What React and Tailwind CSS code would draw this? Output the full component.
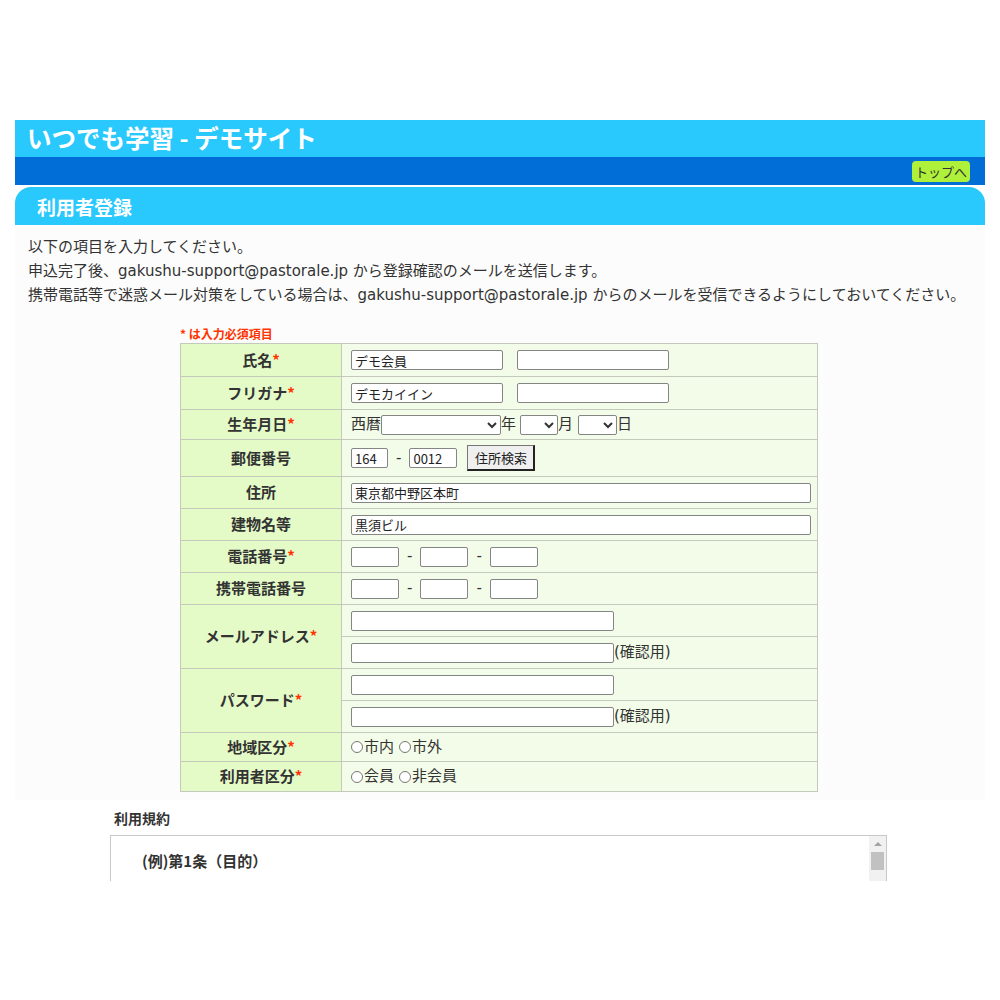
import React from "react";

const font = { fontFamily: '"Noto Sans CJK JP", "Noto Sans", sans-serif' };
const wide = { fontFamily: '"DejaVu Sans", "Noto Sans CJK JP", sans-serif' };

const Req = () => <span className="text-[#ff3300]">*</span>;

const Input = ({ w, value = "" }) => (
    <input
        type="text"
        defaultValue={value}
        style={font}
        className={`${w} h-[20px] bg-white border border-[#858585] rounded-[2px] px-[3px] text-[13px] text-[#222] leading-none outline-none`}
    />
);

const Radio = ({ label }) => (
    <span className="inline-flex items-center mr-[5px]">
        <span className="inline-block w-[12px] h-[12px] rounded-full border border-[#777] bg-white mr-[1px]"></span>
        {label}
    </span>
);

const Label = ({ children, rowSpan }) => (
    <td rowSpan={rowSpan} className="bg-[#e4fbc8] border border-[#c3c9bb] text-center font-bold text-[15px] text-[#333]">
        {children}
    </td>
);

const Cell = ({ children }) => (
    <td className="bg-[#f3fce9] border border-[#c3c9bb] pl-[9px] text-[15px] text-[#333]" style={wide}>
        <div className="flex items-center">{children}</div>
    </td>
);

const Sep = () => <span className="mx-[8px]">-</span>;

const App = () => {
    return (
        <div className="bg-white min-h-[1000px] pt-[120px]" style={font}>
            <div className="mx-[15px]">
                {/* header */}
                <div className="bg-[#29c8fd] h-[37px] pl-[12px] flex items-center">
                    <h1 className="text-white font-bold text-[24.5px] leading-none">いつでも学習 - デモサイト</h1>
                </div>
                <div className="bg-[#006ed6] h-[28px] flex items-center justify-end pr-[15px]">
                    <a className="bg-[#aef03a] text-[#333] text-[13px] leading-none rounded-[4px] px-[3px] py-[4px]">トップへ</a>
                </div>
                <div className="mt-[2px] bg-[#29c8fd] h-[38px] rounded-t-[16px] pl-[22px] flex items-center">
                    <h2 className="text-white font-bold text-[19px] leading-none">利用者登録</h2>
                </div>

                <div className="bg-[#fcfcfc] pt-[10px] pb-[8px]">
                    <div className="pl-[13px] text-[15px] leading-[24px] text-[#333]" style={wide}>
                        <p>以下の項目を入力してください。</p>
                        <p>申込完了後、gakushu-support@pastorale.jp から登録確認のメールを送信します。</p>
                        <p>携帯電話等で迷惑メール対策をしている場合は、gakushu-support@pastorale.jp からのメールを受信できるようにしておいてください。</p>
                    </div>

                    <div className="ml-[165px] mt-[18px] w-[638px]">
                        <p className="text-[#ff3300] font-bold text-[12px] leading-[18px]">* は入力必須項目</p>
                        <table className="w-[638px] table-fixed border-collapse">
                            <colgroup>
                                <col className="w-[161px]" />
                                <col />
                            </colgroup>
                            <tbody>
                                <tr className="h-[33px]">
                                    <Label>氏名<Req /></Label>
                                    <Cell><Input w="w-[152px]" value="デモ会員" /><span className="w-[14px]"></span><Input w="w-[152px]" /></Cell>
                                </tr>
                                <tr className="h-[33px]">
                                    <Label>フリガナ<Req /></Label>
                                    <Cell><Input w="w-[152px]" value="デモカイイン" /><span className="w-[14px]"></span><Input w="w-[152px]" /></Cell>
                                </tr>
                                <tr className="h-[30px]">
                                    <Label>生年月日<Req /></Label>
                                    <Cell>
                                        <span>西暦</span>
                                        <select className="w-[120px] h-[20px] bg-white border border-[#858585] rounded-[2px] text-[13px]"></select>
                                        <span>年</span>
                                        <select className="ml-[4px] w-[38px] h-[20px] bg-white border border-[#858585] rounded-[2px] text-[13px]"></select>
                                        <span>月</span>
                                        <select className="ml-[5px] w-[39px] h-[20px] bg-white border border-[#858585] rounded-[2px] text-[13px]"></select>
                                        <span>日</span>
                                    </Cell>
                                </tr>
                                <tr className="h-[37px]">
                                    <Label>郵便番号</Label>
                                    <Cell>
                                        <Input w="w-[37px]" value="164" />
                                        <Sep />
                                        <Input w="w-[48px]" value="0012" />
                                        <button style={font} className="ml-[10px] w-[68px] h-[26px] bg-[#efefef] border border-[#767676] border-r-2 border-b-2 border-r-[#222] border-b-[#222] text-[13px] text-[#222]">住所検索</button>
                                    </Cell>
                                </tr>
                                <tr className="h-[32px]">
                                    <Label>住所</Label>
                                    <Cell><Input w="w-[460px]" value="東京都中野区本町" /></Cell>
                                </tr>
                                <tr className="h-[32px]">
                                    <Label>建物名等</Label>
                                    <Cell><Input w="w-[460px]" value="黒須ビル" /></Cell>
                                </tr>
                                <tr className="h-[32px]">
                                    <Label>電話番号<Req /></Label>
                                    <Cell><Input w="w-[48px]" /><Sep /><Input w="w-[48px]" /><Sep /><Input w="w-[48px]" /></Cell>
                                </tr>
                                <tr className="h-[32px]">
                                    <Label>携帯電話番号</Label>
                                    <Cell><Input w="w-[48px]" /><Sep /><Input w="w-[48px]" /><Sep /><Input w="w-[48px]" /></Cell>
                                </tr>
                                <tr className="h-[32px]">
                                    <Label rowSpan={2}>メールアドレス<Req /></Label>
                                    <Cell><Input w="w-[263px]" /></Cell>
                                </tr>
                                <tr className="h-[32px]">
                                    <Cell><Input w="w-[263px]" /><span>(確認用)</span></Cell>
                                </tr>
                                <tr className="h-[32px]">
                                    <Label rowSpan={2}>パスワード<Req /></Label>
                                    <Cell><Input w="w-[263px]" /></Cell>
                                </tr>
                                <tr className="h-[32px]">
                                    <Cell><Input w="w-[263px]" /><span>(確認用)</span></Cell>
                                </tr>
                                <tr className="h-[29px]">
                                    <Label>地域区分<Req /></Label>
                                    <Cell><Radio label="市内" /><Radio label="市外" /></Cell>
                                </tr>
                                <tr className="h-[30px]">
                                    <Label>利用者区分<Req /></Label>
                                    <Cell><Radio label="会員" /><Radio label="非会員" /></Cell>
                                </tr>
                            </tbody>
                        </table>
                    </div>
                </div>

                {/* terms */}
                <div className="ml-[95px] w-[777px] mt-[8px]">
                    <p className="pl-[4px] font-bold text-[14px] text-[#333] leading-[20px]">利用規約</p>
                    <div className="mt-[7px] h-[46px] border-t border-l border-r border-[#c8c8c8] bg-white flex overflow-hidden">
                        <div className="flex-1 pl-[31px] pt-[14px] font-bold text-[15px] text-[#333]">(例)第1条（目的）</div>
                        <div className="w-[17px] bg-[#f1f1f1] flex flex-col items-center pt-[6px]">
                            <span className="w-0 h-0 border-l-[4px] border-r-[4px] border-b-[4px] border-l-transparent border-r-transparent border-b-[#a3a3a3]"></span>
                            <span className="mt-[6px] w-[13px] h-[18px] bg-[#c1c1c1]"></span>
                        </div>
                    </div>
                </div>
            </div>
        </div>
    );
};

export default App;
